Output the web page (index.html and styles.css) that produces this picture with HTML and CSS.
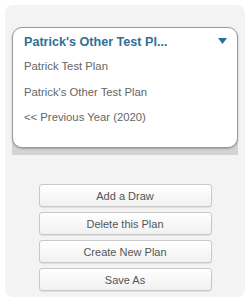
FILE: index.html
```html
<!DOCTYPE html>
<html lang="en">
<head>
    <meta charset="UTF-8">
    <title>Plans</title>
    <link rel="stylesheet" href="styles.css">
</head>
<body>
    <div class="panel">
        <div class="picker-wrap">
            <div class="picker">
                <div class="picker-head">
                    <span class="picker-title">Patrick's Other Test Pl...</span>
                    <svg class="arrow" width="9" height="6" viewBox="0 0 9 6"><path d="M0 0 L9 0 L4.5 6 Z" fill="#2f6f96"/></svg>
                </div>
                <div class="option">Patrick Test Plan</div>
                <div class="option">Patrick's Other Test Plan</div>
                <div class="option">&lt;&lt; Previous Year (2020)</div>
            </div>
        </div>

        <div class="actions">
            <button class="btn">Add a Draw</button>
            <button class="btn">Delete this Plan</button>
            <button class="btn">Create New Plan</button>
            <button class="btn">Save As</button>
        </div>
    </div>
</body>
</html>
```

FILE: styles.css
```css
body {
    margin: 0;
    background: #ffffff;
    font-family: "Liberation Sans", Arial, sans-serif;
}

.panel {
    margin: 5px 3px 3px 5px;
    height: 292px;
    box-sizing: border-box;
    background: #f3f3f3;
    border-radius: 8px;
    padding: 22px 7px 0 7px;
}

/* dropdown */
.picker-wrap {
    padding-bottom: 7px;
    background: linear-gradient(to bottom, transparent 85%, #dcdcdc 85%, #d2d2d2 100%);
}

.picker {
    height: 121px;
    box-sizing: border-box;
    background: #ffffff;
    border: 1px solid #9a9a9a;
    border-radius: 10px;
    padding: 6px 10px 0 11px;
    box-shadow: 0 1px 2px rgba(0, 0, 0, 0.25);
}

.picker-head {
    display: flex;
    justify-content: space-between;
    align-items: center;
    height: 16px;
    margin-bottom: 10px;
}

.picker-title {
    color: #2f6f96;
    font-weight: bold;
    font-size: 12.6px;
}

.arrow {
    margin-top: -2px;
}

.option {
    font-size: 11.3px;
    color: #666666;
    height: 25.5px;
    line-height: 13px;
}

/* buttons */
.actions {
    display: flex;
    flex-direction: column;
    align-items: center;
    gap: 5px;
    margin-top: 29px;
}

.btn {
    width: 173px;
    height: 23px;
    font-family: "Liberation Sans", Arial, sans-serif;
    font-size: 11px;
    color: #555555;
    background: linear-gradient(to bottom, #ffffff, #f1f1f1);
    border: 1px solid #c8c8c8;
    border-radius: 3px;
    box-shadow: 0 1px 1px rgba(0, 0, 0, 0.08);
    padding: 0;
}
```
